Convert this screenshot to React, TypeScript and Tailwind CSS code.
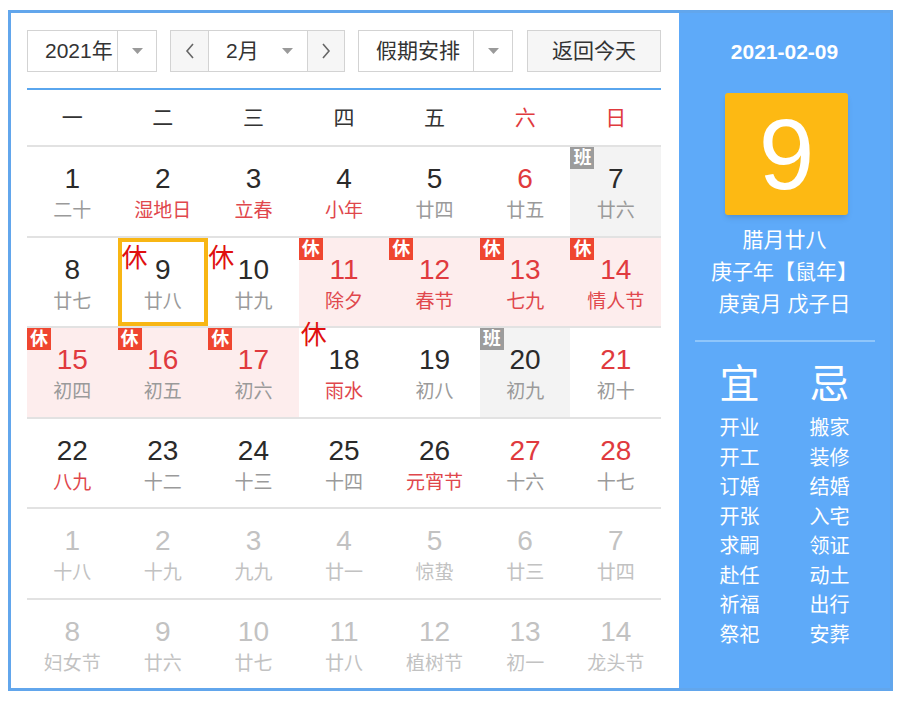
import React from 'react'

type Cell = {
  d: number
  l: string
  num?: 'red' | 'gray'
  lun?: 'red' | 'gray'
  bg?: 'pink' | 'gray'
  badge?: '休' | '班'
  sel?: boolean
  mark?: 'a' | 'b' | 'c'
}

const weekdays = ['一', '二', '三', '四', '五', '六', '日']

const rows: Cell[][] = [
  [
    { d: 1, l: '二十' },
    { d: 2, l: '湿地日', lun: 'red' },
    { d: 3, l: '立春', lun: 'red' },
    { d: 4, l: '小年', lun: 'red' },
    { d: 5, l: '廿四' },
    { d: 6, l: '廿五', num: 'red' },
    { d: 7, l: '廿六', bg: 'gray', badge: '班' },
  ],
  [
    { d: 8, l: '廿七' },
    { d: 9, l: '廿八', sel: true, mark: 'a' },
    { d: 10, l: '廿九', mark: 'b' },
    { d: 11, l: '除夕', num: 'red', lun: 'red', bg: 'pink', badge: '休' },
    { d: 12, l: '春节', num: 'red', lun: 'red', bg: 'pink', badge: '休' },
    { d: 13, l: '七九', num: 'red', lun: 'red', bg: 'pink', badge: '休' },
    { d: 14, l: '情人节', num: 'red', lun: 'red', bg: 'pink', badge: '休' },
  ],
  [
    { d: 15, l: '初四', num: 'red', bg: 'pink', badge: '休' },
    { d: 16, l: '初五', num: 'red', bg: 'pink', badge: '休' },
    { d: 17, l: '初六', num: 'red', bg: 'pink', badge: '休' },
    { d: 18, l: '雨水', lun: 'red', mark: 'c' },
    { d: 19, l: '初八' },
    { d: 20, l: '初九', bg: 'gray', badge: '班' },
    { d: 21, l: '初十', num: 'red' },
  ],
  [
    { d: 22, l: '八九', lun: 'red' },
    { d: 23, l: '十二' },
    { d: 24, l: '十三' },
    { d: 25, l: '十四' },
    { d: 26, l: '元宵节', lun: 'red' },
    { d: 27, l: '十六', num: 'red' },
    { d: 28, l: '十七', num: 'red' },
  ],
  [
    { d: 1, l: '十八', num: 'gray' },
    { d: 2, l: '十九', num: 'gray' },
    { d: 3, l: '九九', num: 'gray' },
    { d: 4, l: '廿一', num: 'gray' },
    { d: 5, l: '惊蛰', num: 'gray' },
    { d: 6, l: '廿三', num: 'gray' },
    { d: 7, l: '廿四', num: 'gray' },
  ],
  [
    { d: 8, l: '妇女节', num: 'gray' },
    { d: 9, l: '廿六', num: 'gray' },
    { d: 10, l: '廿七', num: 'gray' },
    { d: 11, l: '廿八', num: 'gray' },
    { d: 12, l: '植树节', num: 'gray' },
    { d: 13, l: '初一', num: 'gray' },
    { d: 14, l: '龙头节', num: 'gray' },
  ],
]

const yi = ['开业', '开工', '订婚', '开张', '求嗣', '赴任', '祈福', '祭祀']
const ji = ['搬家', '装修', '结婚', '入宅', '领证', '动土', '出行', '安葬']

const numColor = { red: 'text-[#e03a3e]', gray: 'text-[#c2c2c2]', none: 'text-[#2a2a2a]' }
const bgColor = { pink: 'bg-[#fdeded]', gray: 'bg-[#f3f3f3]', none: 'bg-white' }
const markPos = {
  a: 'left-[4px] top-[6px]',
  b: 'left-0 top-[6px]',
  c: 'left-[2px] top-[-7px]',
}

function Caret() {
  return (
    <svg width="11" height="6" viewBox="0 0 11 6">
      <polygon points="0,0 11,0 5.5,6" fill="#9a9a9a" />
    </svg>
  )
}

function Chevron({ right }: { right?: boolean }) {
  return (
    <svg width="10" height="16" viewBox="0 0 10 16">
      <polyline
        points={right ? '2,1 8,8 2,15' : '8,1 2,8 8,15'}
        fill="none"
        stroke="#666"
        strokeWidth="1.6"
      />
    </svg>
  )
}

function DayCell({ c }: { c: Cell }) {
  const lunarColor =
    c.num === 'gray' ? 'text-[#c2c2c2]' : c.lun === 'red' ? 'text-[#e0474c]' : 'text-[#9a9a9a]'
  return (
    <div className={`relative flex flex-col items-center pt-[16px] ${bgColor[c.bg ?? 'none']}`}>
      {c.badge && (
        <span
          className={`absolute left-0 top-0 w-[24px] h-[22px] text-center text-[18px] font-bold leading-[22px] text-white ${
            c.badge === '休' ? 'bg-[#ef4630]' : 'bg-[#9c9c9c]'
          }`}
        >
          {c.badge}
        </span>
      )}
      {c.sel && <div className="absolute inset-0 border-4 border-[#f8b614]" />}
      {c.mark && (
        <span className={`absolute text-[26px] leading-[28px] text-[#e01010] ${markPos[c.mark]}`}>休</span>
      )}
      <span className={`text-[28px] leading-[32px] ${numColor[c.num ?? 'none']}`}>{c.d}</span>
      <span className={`mt-[4px] text-[19px] leading-[24px] ${lunarColor}`}>{c.l}</span>
    </div>
  )
}

export default function App() {
  return (
    <div className="min-h-screen bg-white pl-[8px] pt-[10px] font-['Liberation_Sans','Noto_Sans_CJK_SC',sans-serif]">
      <div className="flex h-[681px] w-[885px] border-[3px] border-[#62a6ec]">
        {/* calendar */}
        <div className="flex w-[668px] flex-col bg-white pl-[16px] pr-[18px] pt-[17px]">
          <div className="flex h-[42px] gap-[13px] text-[21px] text-[#333]">
            <div className="flex w-[130px] border border-[#d3d3d3]">
              <div className="flex flex-1 items-center pl-[17px]">2021年</div>
              <div className="flex w-[39px] items-center justify-center border-l border-[#d3d3d3]">
                <Caret />
              </div>
            </div>
            <div className="flex w-[175px] border border-[#d3d3d3]">
              <div className="flex w-[37px] items-center justify-center bg-[#f6f6f6]">
                <Chevron />
              </div>
              <div className="flex flex-1 items-center justify-between border-x border-[#d3d3d3] pl-[17px] pr-[14px]">
                <span>2月</span>
                <Caret />
              </div>
              <div className="flex w-[36px] items-center justify-center bg-[#f6f6f6]">
                <Chevron right />
              </div>
            </div>
            <div className="flex w-[155px] border border-[#d3d3d3]">
              <div className="flex flex-1 items-center pl-[17px]">假期安排</div>
              <div className="flex w-[39px] items-center justify-center border-l border-[#d3d3d3]">
                <Caret />
              </div>
            </div>
            <div className="ml-px flex w-[134px] items-center justify-center border border-[#d3d3d3] bg-[#f6f6f6]">
              返回今天
            </div>
          </div>

          <div className="mt-[16px] h-[2px] bg-[#5aa6ee]" />

          <div className="grid h-[55px] grid-cols-7 text-[21px]">
            {weekdays.map((w, i) => (
              <div
                key={w}
                className={`flex items-center justify-center ${i > 4 ? 'text-[#e03a3e]' : 'text-[#333]'}`}
              >
                {w}
              </div>
            ))}
          </div>

          <div className="grid flex-1 grid-rows-6">
            {rows.map((r, ri) => (
              <div key={ri} className="grid grid-cols-7 border-t-2 border-[#e2e2e2]">
                {r.map((c, ci) => (
                  <DayCell key={ci} c={c} />
                ))}
              </div>
            ))}
          </div>
        </div>

        {/* today panel */}
        <div className="flex flex-1 flex-col items-center bg-[#5eaaf9] pt-[25px] text-white">
          <div className="text-[21px] font-bold leading-[28px]">2021-02-09</div>
          <div className="mt-[27px] ml-[4px] flex h-[122px] w-[123px] items-center justify-center rounded-[3px] bg-[#fdb913] shadow-md">
            <span className="text-[100px] leading-none">9</span>
          </div>
          <div className="mt-[9px] text-center text-[21px] leading-[32px]">
            <div>腊月廿八</div>
            <div>庚子年【鼠年】</div>
            <div>庚寅月 戊子日</div>
          </div>
          <div className="mt-[20px] h-[2px] w-[180px] bg-[#8fc6fb]" />
          <div className="mt-[20px] grid grid-cols-[90px_90px] text-center">
            <div className="text-[40px] leading-[44px]">宜</div>
            <div className="text-[40px] leading-[44px]">忌</div>
            <div className="mt-[8px] text-[20px] leading-[29.5px]">
              {yi.map((t) => (
                <div key={t}>{t}</div>
              ))}
            </div>
            <div className="mt-[8px] text-[20px] leading-[29.5px]">
              {ji.map((t) => (
                <div key={t}>{t}</div>
              ))}
            </div>
          </div>
        </div>
      </div>
    </div>
  )
}
